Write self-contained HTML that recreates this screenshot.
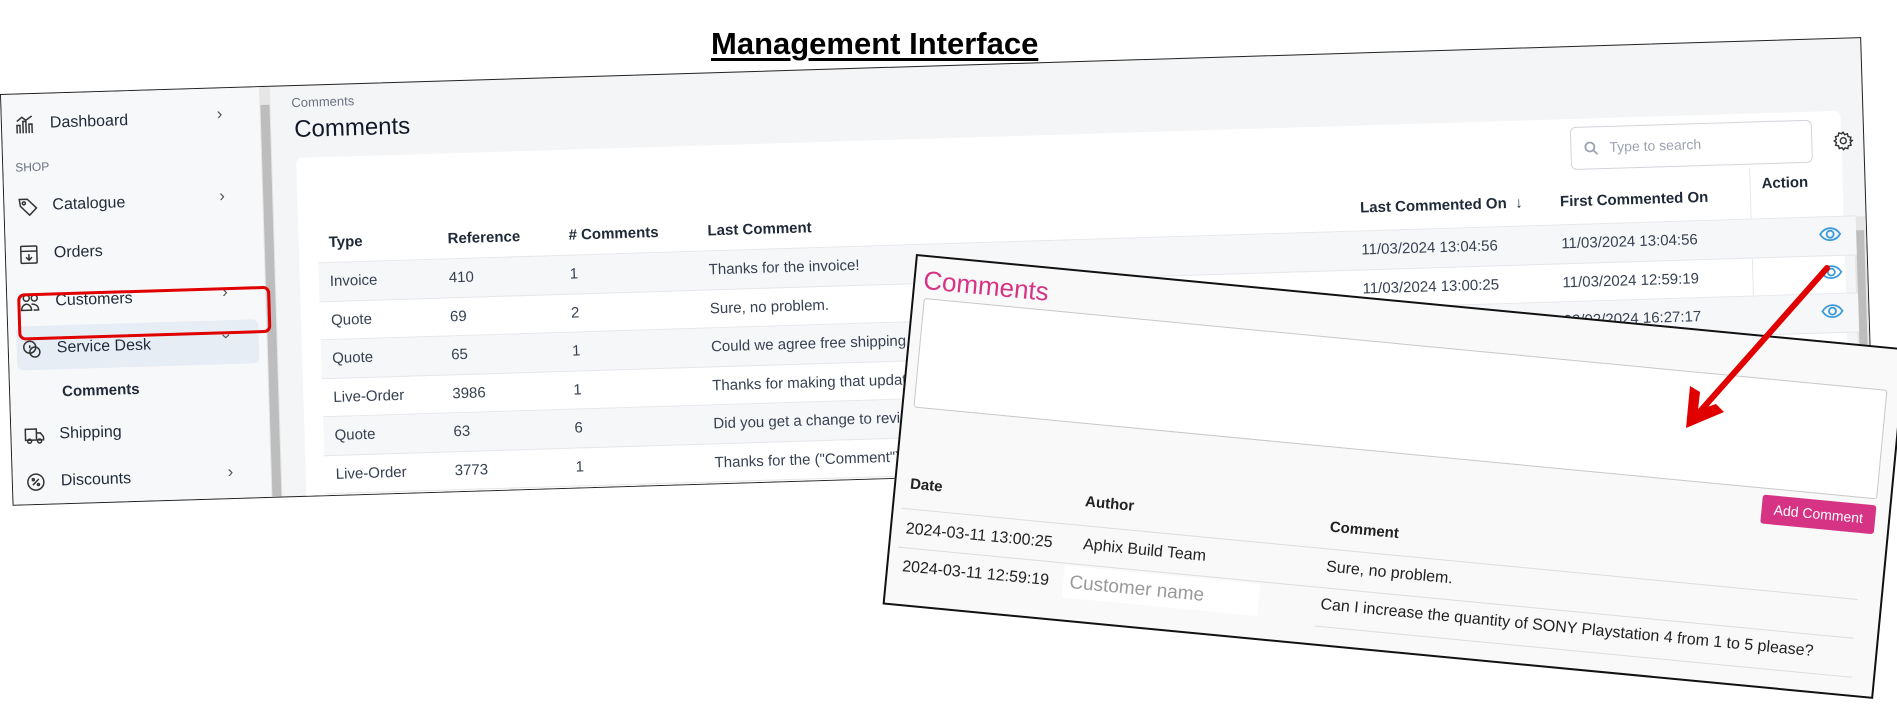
<!DOCTYPE html>
<html><head><meta charset="utf-8"><style>
*{box-sizing:border-box;margin:0;padding:0}
body{width:1897px;height:705px;background:#fff;position:relative;overflow:hidden;font-family:"Liberation Sans",sans-serif;color:#222}
.title{position:absolute;left:711px;top:26px;font-family:"Liberation Sans Narrow","Liberation Sans",sans-serif;font-stretch:condensed;font-weight:bold;font-size:31px;text-decoration:underline;text-decoration-thickness:3px;text-underline-offset:4px;color:#000;letter-spacing:0}
.main{position:absolute;left:0;top:94px;width:1862px;height:412px;transform:rotate(-1.75deg);transform-origin:0 0;border:1.5px solid #222;background:#f4f5f7;overflow:hidden}
.side{position:absolute;left:0;top:0;width:258px;height:100%;background:#f7f8fa}
.sb{position:absolute;left:258px;top:0;width:11px;height:100%;background:#e6e6e6}
.sb i{position:absolute;left:1px;top:18px;width:9px;bottom:0;background:#bdbdbd}
.it{position:absolute;left:12px;font-size:16px;color:#1f2937;display:flex;align-items:center;height:24px}
.it svg{width:22px;height:22px;margin-right:14px;flex:none}
.chev{position:absolute;left:215px;font-size:17px;color:#555}
.card{position:absolute;left:293px;top:72px;width:1545px;height:400px;background:#fff;border-radius:6px}
.h{position:absolute;font-size:15px;font-weight:600;color:#1f2937}
.row{position:absolute;left:312px;width:1538px;height:38.5px;border-bottom:1px solid #e5e7eb}
.row.g{background:#f6f7f9}
.c{position:absolute;font-size:15px;color:#374151;top:10px;white-space:nowrap}
.ov{position:absolute;left:916px;top:254px;width:995px;height:352px;transform:rotate(5.45deg);transform-origin:0 0;border:2px solid #111;background:#f9f9f9;font-family:"Liberation Sans",sans-serif;overflow:hidden}
.oc{position:absolute;font-size:16px;color:#222;white-space:nowrap}
</style></head><body>
<div class="title">Management Interface</div>

<div class="main">
 <div class="side">
  <div class="it" style="top:18px"><svg viewBox="0 0 22 22" fill="none" stroke="#333" stroke-width="1.5"><path d="M3 20V12h3v8M9 20V8h3v12M15 20V11h3v9M3 8l5-4 4 3 6-4"/></svg>Dashboard</div><div class="chev" style="top:16px">›</div>
  <div style="position:absolute;left:12px;top:66px;font-size:12px;color:#6b7280">SHOP</div>
  <div class="it" style="top:100px"><svg viewBox="0 0 22 22" fill="none" stroke="#333" stroke-width="1.5"><path d="M3 4h8l9 9-7 7-9-9z"/><circle cx="7.5" cy="8" r="1.5"/></svg>Catalogue</div><div class="chev" style="top:98px">›</div>
  <div class="it" style="top:148px"><svg viewBox="0 0 22 22" fill="none" stroke="#333" stroke-width="1.5"><rect x="3" y="3" width="16" height="17" rx="1"/><path d="M3 8h16M11 11v6M8 14l3 3 3-3"/></svg>Orders</div>
  <div class="it" style="top:196px"><svg viewBox="0 0 22 22" fill="none" stroke="#333" stroke-width="1.5"><circle cx="7" cy="7" r="3"/><circle cx="15" cy="7" r="3"/><path d="M2 19c0-4 3-6 5-6s5 2 5 6zM12 13c3 0 7 1 7 6h-5"/></svg>Customers</div><div class="chev" style="top:194px">›</div>
  <div style="position:absolute;left:8px;top:232px;width:242px;height:44px;background:#e7edf5;border-radius:6px"></div>
  <div class="it" style="top:243px"><svg viewBox="0 0 22 22" fill="none" stroke="#333" stroke-width="1.5"><circle cx="9" cy="9" r="6"/><circle cx="14" cy="14" r="5"/><path d="M9 7v3"/></svg>Service Desk</div><div class="chev" style="top:238px;transform:rotate(90deg)">›</div>
  <div style="position:absolute;left:52px;top:290px;font-size:15px;font-weight:bold;color:#1f2937">Comments</div>
  <div class="it" style="top:329px"><svg viewBox="0 0 22 22" fill="none" stroke="#333" stroke-width="1.5"><path d="M2 5h11v11H2zM13 9h4l3 4v3h-7"/><circle cx="6" cy="17" r="2"/><circle cx="16" cy="17" r="2"/></svg>Shipping</div>
  <div class="it" style="top:376px"><svg viewBox="0 0 22 22" fill="none" stroke="#333" stroke-width="1.5"><circle cx="11" cy="11" r="8"/><path d="M8 14l6-6"/><circle cx="8.5" cy="8.5" r="1"/><circle cx="13.5" cy="13.5" r="1"/></svg>Discounts</div><div class="chev" style="top:374px">›</div>
 </div>
 <div class="sb"><i></i></div>
 <div style="position:absolute;left:10px;top:199px;width:253px;height:47px;border:3px solid #e00000;border-radius:7px;z-index:5"></div>
 <div style="position:absolute;left:290px;top:9px;font-size:13px;color:#6b7280">Comments</div>
 <div style="position:absolute;left:292px;top:30px;font-size:24px;color:#111827">Comments</div>
 <div class="card"></div>
 <div style="position:absolute;left:1567px;top:80px;width:242px;height:43px;border:1px solid #d1d5db;border-radius:6px;background:#fff;font-size:14px;color:#9ca3af;padding:12px 0 0 38px">Type to search
  <svg style="position:absolute;left:12px;top:13px" width="16" height="16" viewBox="0 0 16 16" fill="none" stroke="#9ca3af" stroke-width="1.8"><circle cx="6.5" cy="6.5" r="4.5"/><path d="M10 10l4 4"/></svg></div>
 <svg style="position:absolute;left:1830px;top:92px" width="20" height="20" viewBox="0 0 20 20" fill="none" stroke="#333" stroke-width="1.4"><circle cx="10" cy="10" r="3"/><path d="M10 1.5l1.5 2.5 2.8-.8.6 2.8 2.8.8-.8 2.8L19 10l-2.1 1.8.8 2.8-2.8.6-.6 2.8-2.8-.8L10 19l-1.5-2.1-2.8.8-.6-2.8-2.8-.6.8-2.8L1 10l2.1-1.5-.8-2.8 2.8-.8.6-2.8 2.8.8z"/></svg>
 <div class="h" style="left:323px;top:149px">Type</div>
 <div class="h" style="left:442px;top:149px">Reference</div>
 <div class="h" style="left:563px;top:149px"># Comments</div>
 <div class="h" style="left:702px;top:149px">Last Comment</div>
 <div class="h" style="left:1355px;top:146px">Last Commented On &nbsp;↓</div>
 <div class="h" style="left:1555px;top:146px">First Commented On</div>
 <div style="position:absolute;left:1745px;top:126px;width:1px;height:290px;background:#e5e7eb"></div>
 <div class="h" style="left:1757px;top:134px">Action</div>
 <div style="position:absolute;left:312px;top:177px;width:1538px;height:1px;background:#e5e7eb"></div>
 <div style="position:absolute;left:1848px;top:178px;width:12px;height:240px;background:#e6e6e6"><i style="position:absolute;left:2px;top:14px;width:8px;bottom:0;background:#bdbdbd"></i></div>

 <div class="row g" style="top:178px"><span class="c" style="left:11px">Invoice</span><span class="c" style="left:130px">410</span><span class="c" style="left:251px">1</span><span class="c" style="left:390px">Thanks for the invoice!</span><span class="c" style="left:1043px">11/03/2024 13:04:56</span><span class="c" style="left:1243px">11/03/2024 13:04:56</span></div>
 <div class="row" style="top:216.5px"><span class="c" style="left:11px">Quote</span><span class="c" style="left:130px">69</span><span class="c" style="left:251px">2</span><span class="c" style="left:390px">Sure, no problem.</span><span class="c" style="left:1043px">11/03/2024 13:00:25</span><span class="c" style="left:1243px">11/03/2024 12:59:19</span></div>
 <div class="row g" style="top:255px"><span class="c" style="left:11px">Quote</span><span class="c" style="left:130px">65</span><span class="c" style="left:251px">1</span><span class="c" style="left:390px">Could we agree free shipping on this order?</span><span class="c" style="left:1243px">03/02/2024 16:27:17</span></div>
 <div class="row" style="top:293.5px"><span class="c" style="left:11px">Live-Order</span><span class="c" style="left:130px">3986</span><span class="c" style="left:251px">1</span><span class="c" style="left:390px">Thanks for making that update</span></div>
 <div class="row g" style="top:332px"><span class="c" style="left:11px">Quote</span><span class="c" style="left:130px">63</span><span class="c" style="left:251px">6</span><span class="c" style="left:390px">Did you get a change to review</span></div>
 <div class="row" style="top:370.5px"><span class="c" style="left:11px">Live-Order</span><span class="c" style="left:130px">3773</span><span class="c" style="left:251px">1</span><span class="c" style="left:390px">Thanks for the ("Comment")</span></div>
 <svg style="position:absolute;left:1812px;top:186px" width="24" height="140" viewBox="0 0 24 140" fill="none" stroke="#3b9ad9" stroke-width="1.8">
  <path d="M2 9c5-8 15-8 20 0c-5 8-15 8-20 0z"/><circle cx="12" cy="9" r="3.5"/>
  <path d="M2 47c5-8 15-8 20 0c-5 8-15 8-20 0z"/><circle cx="12" cy="47" r="3.5"/>
  <path d="M2 86c5-8 15-8 20 0c-5 8-15 8-20 0z"/><circle cx="12" cy="86" r="3.5"/>
  <path d="M2 124c5-8 15-8 20 0c-5 8-15 8-20 0z"/><circle cx="12" cy="124" r="3.5"/>
 </svg>
</div>

<div class="ov">
 <div class="oc" style="left:8px;top:8px;font-size:26px;color:#d63384">Comments</div>
 <div style="position:absolute;left:10px;top:41px;width:968px;height:110px;border:1px solid #c8c8c8;border-radius:3px;background:#fff"></div>
 <div style="position:absolute;left:864px;top:157px;width:114px;height:29px;background:#d63384;border-radius:3px;color:#fff;font-size:14px;text-align:center;line-height:29px">Add Comment</div>
 <div class="oc" style="left:14px;top:219px;font-weight:bold;font-size:15px">Date</div>
 <div class="oc" style="left:190px;top:220px;font-weight:bold;font-size:15px">Author</div>
 <div class="oc" style="left:436px;top:222px;font-weight:bold;font-size:15px">Comment</div>
 <div style="position:absolute;left:8px;top:252px;width:960px;height:1px;background:#ddd"></div>
 <div class="oc" style="left:14px;top:264px">2024-03-11 13:00:25</div>
 <div class="oc" style="left:192px;top:263px">Aphix Build Team</div>
 <div class="oc" style="left:436px;top:262px">Sure, no problem.</div>
 <div style="position:absolute;left:8px;top:291px;width:960px;height:1px;background:#ddd"></div>
 <div class="oc" style="left:14px;top:302px">2024-03-11 12:59:19</div>
 <div style="position:absolute;left:176px;top:294px;width:196px;height:32px;background:#fff"></div>
 <div class="oc" style="left:182px;top:300px;color:#999;font-size:19px">Customer name</div>
 <div class="oc" style="left:434px;top:300px">Can I increase the quantity of SONY Playstation 4 from 1 to 5 please?</div>
 <div style="position:absolute;left:430px;top:330px;width:540px;height:1px;background:#ddd"></div>
</div>

<svg style="position:absolute;left:0;top:0" width="1897" height="705">
 <line x1="1827" y1="268" x2="1696" y2="416" stroke="#e00000" stroke-width="6" stroke-linecap="round"/>
 <polygon points="1686,428 1690,386 1700,392 1698,410 1716,404 1724,412" fill="#e00000"/>
</svg>
</body></html>
